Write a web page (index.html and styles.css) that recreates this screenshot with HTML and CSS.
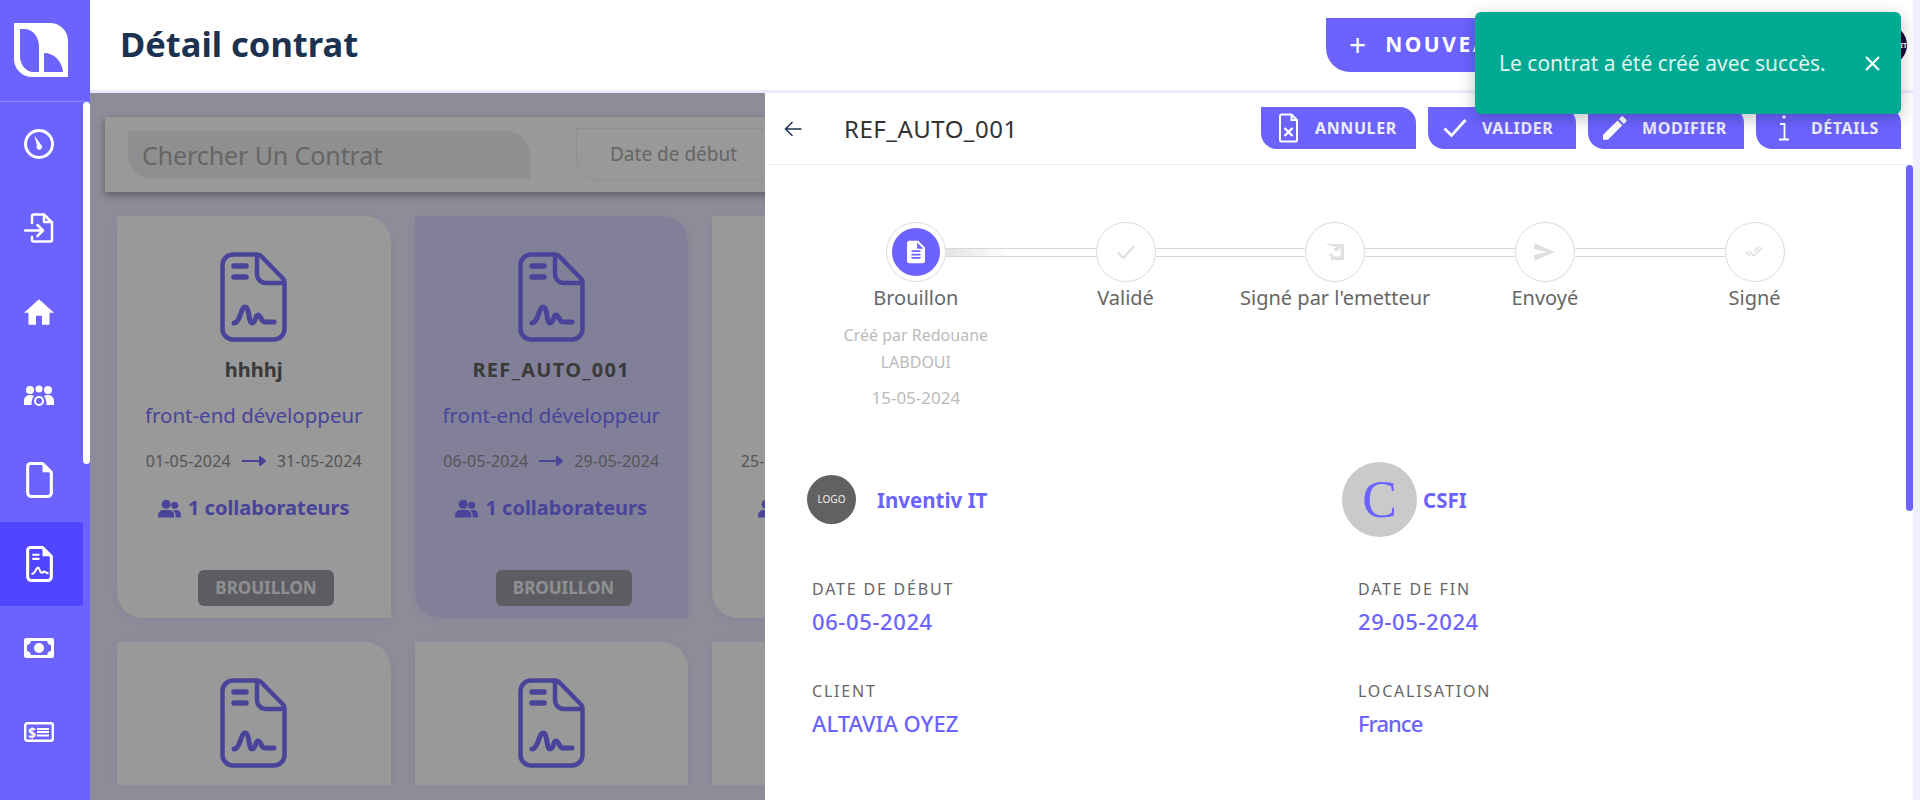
FILE: index.html
```html
<!DOCTYPE html>
<html lang="fr">
<head>
<meta charset="utf-8">
<title>Détail contrat</title>
<link rel="stylesheet" href="styles.css">
</head>
<body>
<svg class="defs" width="0" height="0" aria-hidden="true">
  <symbol id="contract" viewBox="0 0 67 90">
    <g fill="none" stroke="currentColor" stroke-width="4.5" stroke-linecap="round" stroke-linejoin="round">
      <path d="M13 2.5H37a6 6 0 0 1 4.5 2L62.5 26a6 6 0 0 1 2 4.5V77A10.500 10.500 0 0 1 54 87.500H13A10.500 10.500 0 0 1 2.500 77V13A10.500 10.500 0 0 1 13 2.500Z"/>
      <path d="M37 3V22a9 9 0 0 0 9 9H64"/>
      <path d="M14 14H26M14 25H26" stroke-width="5.500"/>
      <path d="M14 71C20 71 21 55 25 55C30 55 28 71 32 71C36 71 35 63 38 63C41 63 41 70 45 70H54" stroke-width="5"/>
    </g>
  </symbol>
  <symbol id="friends" viewBox="0 0 24 20">
    <circle cx="8.500" cy="5.500" r="4.800"/>
    <path d="M0 19.500V17c0-3.500 3-5.500 5.500-5.500h6c2.500 0 5.500 2 5.500 5.500v2.500Z"/>
    <circle cx="17.500" cy="6.500" r="3.700"/>
    <path d="M15.500 11.500h4c2.500 0 4.500 2 4.500 4.500v3.500h-5.500V17c0-2-1.200-4-3-5.500Z"/>
  </symbol>
</svg>

<div class="app">
  <aside class="side">
    <div class="brand">
      <svg class="brand-logo" viewBox="0 0 54 54">
        <path fill="#fff" d="M0 0H36A18 18 0 0 1 54 18V54H18A18 18 0 0 1 0 36Z"/>
        <path fill="#6c63ff" d="M6 6H10C19 6 25 14 25 24V49H20C11 49 6 41 6 33Z"/>
        <path fill="#6c63ff" d="M30 30C40 30 48 38 49 49H30Z"/>
      </svg>
    </div>
    <div class="side-body">
      <nav class="nav">
        <a class="nav-item">
          <svg class="nav-ic" viewBox="0 0 30 30"><circle cx="15" cy="15" r="13.500" fill="none" stroke="#fff" stroke-width="3"/><path d="M10.500 6.500L13 16.500a2.700 2.700 0 1 0 4-.7Z" fill="#fff"/></svg>
        </a>
        <a class="nav-item">
          <svg class="nav-ic" viewBox="0 0 30 30"><path d="M8 10V3a1.500 1.500 0 0 1 1.500-1.500H20l8 8V27a1.500 1.500 0 0 1-1.500 1.500H9.500A1.500 1.500 0 0 1 8 27V24M20 2v7h8" fill="none" stroke="#fff" stroke-width="2.500" stroke-linejoin="round" stroke-linecap="round"/><path d="M1 17.500H19M13.500 12l5.500 5.500-5.500 5.500" fill="none" stroke="#fff" stroke-width="2.500" stroke-linecap="round" stroke-linejoin="round"/></svg>
        </a>
        <a class="nav-item">
          <svg class="nav-ic" viewBox="2 3 20 17"><path fill="#fff" d="M10 20v-6h4v6h5v-8h3L12 3 2 12h3v8z"/></svg>
        </a>
        <a class="nav-item">
          <svg class="nav-ic" viewBox="0 0 30 22"><g fill="#fff"><circle cx="6" cy="5" r="4"/><circle cx="24" cy="5" r="4"/><circle cx="15" cy="4" r="3.500"/><path d="M0 20v-4c0-4 3-6 6-6 2 0 3 .5 4 1.200-1.500 1.500-2.500 4-2.500 8.800ZM30 20v-4c0-4-3-6-6-6-2 0-3 .5-4 1.200 1.500 1.500 2.500 4 2.500 8.800Z"/></g><circle cx="15" cy="16" r="4" fill="#6c63ff" stroke="#fff" stroke-width="2"/></svg>
        </a>
        <a class="nav-item">
          <svg class="nav-ic nav-file" viewBox="0 0 26 35"><path d="M4 1.500H16L24.500 10V30A3.500 3.500 0 0 1 21 33.500H5A3.500 3.500 0 0 1 1.500 30V4A3 3 0 0 1 4 1.500Z" fill="none" stroke="#fff" stroke-width="3" stroke-linejoin="round"/><path d="M16 1.500V10H24.500Z" fill="#fff"/></svg>
        </a>
        <a class="nav-item active">
          <svg class="nav-ic nav-file" viewBox="0 0 26 35"><path d="M4 1.500H16L24.500 10V30A3.500 3.500 0 0 1 21 33.500H5A3.500 3.500 0 0 1 1.500 30V4A3 3 0 0 1 4 1.500Z" fill="none" stroke="#fff" stroke-width="3" stroke-linejoin="round"/><path d="M16 1.500V10H24.500Z" fill="#fff"/><path d="M6 8.500H13M6 12.500H13" stroke="#fff" stroke-width="2"/><path d="M6 27C9 27 9.500 21 11.500 21C13.500 21 13 26 15 26C16.500 26 16.500 24.500 18 25L21 26.500" fill="none" stroke="#fff" stroke-width="2" stroke-linecap="round"/></svg>
        </a>
        <a class="nav-item">
          <svg class="nav-ic" viewBox="0 0 30 20"><path fill="#fff" fill-rule="evenodd" d="M2 0H28a2 2 0 0 1 2 2V18a2 2 0 0 1-2 2H2a2 2 0 0 1-2-2V2A2 2 0 0 1 2 0ZM7 3C6.500 5.500 5.500 6.500 3 7V13C5.500 13.500 6.500 14.500 7 17H23C23.500 14.500 24.500 13.500 27 13V7C24.500 6.500 23.500 5.500 23 3Z"/><circle cx="15" cy="10" r="5" fill="#fff"/></svg>
        </a>
        <a class="nav-item">
          <svg class="nav-ic" viewBox="0 0 30 20"><rect x="1.200" y="1.200" width="27.600" height="17.600" rx="2" fill="none" stroke="#fff" stroke-width="2.400"/><text x="8" y="15.500" class="dollar">$</text><path d="M13 7H25M13 10H25M13 13.500H25" stroke="#fff" stroke-width="2"/></svg>
        </a>
      </nav>
      <div class="side-scroll"><span class="side-thumb"></span></div>
    </div>
  </aside>

  <div class="main">
    <header class="top">
      <h1 class="page-title">Détail contrat</h1>
      <button class="new-btn"><span class="plus">+</span>NOUVEAU CONTRAT</button>
      <div class="avatar"><span class="avatar-text">INVENTIT</span></div>
    </header>
    <div class="content">
      <section class="filters">
        <div class="search">Chercher Un Contrat</div>
        <div class="date-field">Date de début</div>
      </section>
      <section class="cards">
        <article class="card">
          <svg class="card-ic"><use href="#contract"/></svg>
          <h3 class="card-name">hhhhj</h3>
          <p class="card-job">front-end développeur</p>
          <p class="card-dates"><span>01-05-2024</span><svg class="date-arrow" viewBox="0 0 24 10"><path d="M0 5H22M18 1l5 4-5 4Z" stroke="currentColor" stroke-width="2" fill="currentColor"/></svg><span>31-05-2024</span></p>
          <p class="card-team"><svg class="team-ic"><use href="#friends"/></svg>1 collaborateurs</p>
          <span class="badge">BROUILLON</span>
        </article>
        <article class="card selected">
          <svg class="card-ic"><use href="#contract"/></svg>
          <h3 class="card-name wide">REF_AUTO_001</h3>
          <p class="card-job">front-end développeur</p>
          <p class="card-dates"><span>06-05-2024</span><svg class="date-arrow" viewBox="0 0 24 10"><path d="M0 5H22M18 1l5 4-5 4Z" stroke="currentColor" stroke-width="2" fill="currentColor"/></svg><span>29-05-2024</span></p>
          <p class="card-team"><svg class="team-ic"><use href="#friends"/></svg>1 collaborateurs</p>
          <span class="badge">BROUILLON</span>
        </article>
        <article class="card">
          <svg class="card-ic"><use href="#contract"/></svg>
          <h3 class="card-name">REF_002</h3>
          <p class="card-job">développeur</p>
          <p class="card-dates"><span>25-05-2024</span><svg class="date-arrow" viewBox="0 0 24 10"><path d="M0 5H22M18 1l5 4-5 4Z" stroke="currentColor" stroke-width="2" fill="currentColor"/></svg><span>31-05-2024</span></p>
          <p class="card-team"><svg class="team-ic"><use href="#friends"/></svg>1 collaborateur</p>
          <span class="badge">BROUILLON</span>
        </article>
        <article class="card"><svg class="card-ic"><use href="#contract"/></svg></article>
        <article class="card"><svg class="card-ic"><use href="#contract"/></svg></article>
        <article class="card"><svg class="card-ic"><use href="#contract"/></svg></article>
      </section>
    </div>
  </div>
  <div class="page-scroll"></div>

  <div class="overlay"></div>

  <section class="panel">
    <header class="panel-head">
      <svg class="back" viewBox="0 0 18 16"><path d="M17.500 8H1.500M8.500 1L1.500 8l7 7" fill="none" stroke="#1b3250" stroke-width="1.500"/></svg>
      <h2 class="panel-title">REF_AUTO_001</h2>
      <div class="actions">
        <button class="act act-annuler"><svg class="act-ic" viewBox="0 0 20 30"><path d="M3 1.500H13L18.500 7V27A1.500 1.500 0 0 1 17 28.500H3A1.500 1.500 0 0 1 1.500 27V3A1.500 1.500 0 0 1 3 1.500ZM13 2V7H18" fill="none" stroke="#fff" stroke-width="2"/><path d="M6 15L14 23M14 15L6 23" stroke="#fff" stroke-width="2.400"/></svg>ANNULER</button>
        <button class="act act-valider"><svg class="act-ic" viewBox="0 0 24 20"><path d="M1.500 10.500L8.500 17.500L22.500 2" fill="none" stroke="#fff" stroke-width="2.800"/></svg>VALIDER</button>
        <button class="act act-modifier"><svg class="act-ic" viewBox="3 3 18.300 18"><path fill="#fff" d="M3 17.250V21h3.750L17.810 9.940l-3.750-3.750L3 17.250zM20.710 7.040c.39-.39.39-1.020 0-1.410l-2.340-2.340c-.39-.39-1.020-.39-1.410 0l-1.830 1.830 3.750 3.750 1.830-1.830z"/></svg>MODIFIER</button>
        <button class="act act-details"><svg class="act-ic" viewBox="0 0 12 26"><circle cx="6" cy="2" r="1.800" fill="#fff"/><path d="M2 9H6.500V24.500M1 24.500H11" fill="none" stroke="#fff" stroke-width="1.800"/></svg>DÉTAILS</button>
      </div>
    </header>
    <div class="panel-body">
      <div class="panel-content">
        <ol class="stepper">
          <li class="step first">
            <div class="step-head"><span class="line none"></span><span class="dot current"><span class="dot-in"><svg class="dot-doc" viewBox="4 2 16 20"><path fill="#fff" d="M14 2H6c-1.100 0-1.990.9-1.990 2L4 20c0 1.100.89 2 1.990 2H18c1.100 0 2-.9 2-2V8l-6-6zm2 16H8v-1.500h8V18zm0-3H8v-1.500h8V15zm0-3H8v-1.500h8V12zm-3-3V3.500L18.500 9H13z"/></svg></span></span><span class="line grad"></span></div>
            <div class="step-label">Brouillon</div>
            <div class="step-by">Créé par Redouane LABDOUI</div>
            <div class="step-date">15-05-2024</div>
          </li>
          <li class="step">
            <div class="step-head"><span class="line"></span><span class="dot"><svg class="dot-ic" viewBox="0 0 20 16"><path d="M2 8.500L7.500 14L18 2" fill="none" stroke="#e0e0e0" stroke-width="2.500"/></svg></span><span class="line"></span></div>
            <div class="step-label">Validé</div>
          </li>
          <li class="step">
            <div class="step-head"><span class="line"></span><span class="dot"><svg class="dot-ic" viewBox="0 0 20 16"><path fill="#e0e0e0" d="M0 0H19V16H6V11.500H3L7 9 8.500 12.500H15.500V4L11 8 8.500 4.500 12 3.500 0 0Z"/></svg></span><span class="line"></span></div>
            <div class="step-label">Signé par l'emetteur</div>
          </li>
          <li class="step">
            <div class="step-head"><span class="line"></span><span class="dot"><svg class="dot-send" viewBox="0 0 21 18"><path fill="#e0e0e0" d="M0 0L21 9 0 18V12L13 9 0 6Z"/></svg></span><span class="line"></span></div>
            <div class="step-label">Envoyé</div>
          </li>
          <li class="step">
            <div class="step-head"><span class="line"></span><span class="dot"><svg class="dot-ic" viewBox="0 0 24 16"><path d="M1 7.500L6 12.500M5.500 7.500L10.500 12.500L21 2.500M11 7.500L17 1.500" fill="none" stroke="#e0e0e0" stroke-width="2"/></svg></span><span class="line none"></span></div>
            <div class="step-label">Signé</div>
          </li>
        </ol>

        <div class="parties">
          <div class="party"><span class="party-logo">LOGO</span><span class="party-name">Inventiv IT</span></div>
          <div class="party"><span class="party-letter">C</span><span class="party-name">CSFI</span></div>
        </div>

        <dl class="fields">
          <div class="field"><dt>DATE DE DÉBUT</dt><dd class="num">06-05-2024</dd></div>
          <div class="field"><dt>DATE DE FIN</dt><dd class="num">29-05-2024</dd></div>
          <div class="field"><dt>CLIENT</dt><dd>ALTAVIA OYEZ</dd></div>
          <div class="field"><dt>LOCALISATION</dt><dd class="short">France</dd></div>
        </dl>
      </div>
      <div class="panel-scroll"><span class="panel-thumb"></span></div>
    </div>
  </section>

  <div class="toast">
    <span class="toast-text">Le contrat a été créé avec succès.</span>
    <svg class="toast-x" viewBox="0 0 14 14"><path d="M1 1L13 13M13 1L1 13" stroke="#fff" stroke-width="2"/></svg>
  </div>
</div>
</body>
</html>
```
FILE: styles.css
```css
* { box-sizing: border-box; }
html, body { margin: 0; height: 100%; }
body { font-family: "Noto Sans", "Lato", sans-serif; overflow: hidden; background: #fff; }
.defs { position: absolute; }
h1, h2, h3, p, dl, dd, ol { margin: 0; padding: 0; }
ol { list-style: none; }
button { font-family: inherit; border: 0; cursor: pointer; }

.app { position: relative; display: flex; width: 1920px; height: 800px; overflow: hidden; }

/* sidebar */
.side { width: 90px; flex: none; background: #6c63ff; display: flex; flex-direction: column; position: relative; z-index: 2; }
.brand { height: 102px; flex: none; border-bottom: 1px solid #8f88ff; padding: 23px 0 0 14px; }
.brand-logo { display: block; width: 54px; height: 54px; }
.side-body { display: flex; flex: 1; min-height: 0; }
.nav { width: 83px; display: flex; flex-direction: column; }
.nav-item { height: 84px; flex: none; display: flex; align-items: center; padding-left: 24px; }
.nav-item.active { background: #5046ff; }
.nav-ic { width: 30px; height: 30px; display: block; }
.nav-file { width: 27px; height: 36px; margin-left: 2px; }
.dollar { font: 700 14px "Noto Sans", sans-serif; fill: #fff; text-anchor: middle; }
.side-scroll { width: 7px; }
.side-thumb { display: block; width: 7px; height: 362px; background: #fff; border-radius: 4px; }

/* main */
.main { flex: 1; min-width: 0; display: flex; flex-direction: column; background: #ece9fd; isolation: isolate; }
.top { height: 93px; flex: none; background: #fff; border-bottom: 3px solid #ece9fd; display: flex; align-items: flex-start; padding-left: 30px; }
.page-title { font-size: 34.500px; line-height: 87px; font-weight: 700; color: #1b3250; flex: 1; }
.new-btn { margin-top: 18px; width: 500px; height: 54px; background: #6c63ff; color: #fff; font-size: 21px; font-weight: 700; letter-spacing: 2.500px; border-radius: 0 24px 0 24px; text-align: left; padding: 0 0 2px 23px; display: flex; align-items: center; }
.plus { font-size: 30px; font-weight: 400; margin-right: 19px; letter-spacing: 0; }
.avatar { width: 40px; height: 40px; margin: 25px 6px 0 41px; border-radius: 50%; background: #14103f; display: flex; align-items: center; justify-content: flex-end; overflow: hidden; }
.avatar-text { color: #fff; font-size: 7px; font-weight: 700; white-space: nowrap; }
.content { flex: 1; min-height: 0; padding: 24px 0 15px 15px; display: flex; flex-direction: column; }
.filters { height: 75px; flex: none; background: #fff; box-shadow: 0 3px 8px rgba(0,0,0,.35); display: flex; align-items: center; padding-left: 23px; position: relative; z-index: 1; }
.search { width: 402px; height: 48px; background: #eee; border-radius: 0 24px 0 24px; font-size: 25px; line-height: 48px; padding-left: 14px; color: #aaa; letter-spacing: -.1px; }
.date-field { width: 320px; height: 53px; margin-left: 46px; border: 1px solid #eee; border-radius: 0 24px 0 24px; font-size: 19px; line-height: 51px; padding-left: 33px; color: #aaa; }
.cards { flex: 1; min-height: 0; overflow: hidden; padding: 24px 0 0 12px; display: grid; grid-template-columns: repeat(3, 273.500px); grid-auto-rows: 402px; gap: 24px; }
.card { background: #fff; border-radius: 0 26px 0 26px; box-shadow: 0 2px 8px rgba(108,99,255,.08); display: flex; flex-direction: column; align-items: center; padding-top: 36px; position: relative; }
.card.selected { background: #d9d4ff; }
.card-ic { width: 67px; height: 90px; color: #7a72ff; flex: none; }
.card-name { font-size: 20px; line-height: 28px; margin-top: 14px; font-weight: 700; color: #616161; }
.card-name.wide { letter-spacing: 1.300px; }
.card-job { font-size: 20.500px; line-height: 28px; margin-top: 17px; color: #7a72ff; white-space: nowrap; }
.card-dates { display: flex; align-items: center; font-size: 16px; line-height: 20px; margin-top: 22px; color: #8e8e8e; letter-spacing: .15px; white-space: nowrap; }
.date-arrow { width: 24px; height: 10px; margin: 0 11px; color: #7a72ff; }
.card-team { display: flex; align-items: center; font-size: 20px; font-weight: 700; line-height: 28px; margin-top: 23px; color: #7a72ff; white-space: nowrap; }
.team-ic { width: 23px; height: 19px; fill: #7a72ff; margin-right: 7px; }
.badge { position: absolute; left: 81px; top: 354px; width: 136px; height: 36px; background: #989ba6; color: #eee; border-radius: 6px; font-size: 17px; font-weight: 700; line-height: 36px; text-align: center; }
.page-scroll { width: 7px; flex: none; background: #f0efff; position: relative; z-index: 2; }

/* overlay + drawer */
.overlay { position: absolute; left: 90px; top: 93px; right: 7px; bottom: 0; background: rgba(0,0,0,.4); }
.panel { position: absolute; left: 765px; top: 93px; right: 7px; bottom: 0; background: #fff; display: flex; flex-direction: column; }
.panel-head { height: 72px; flex: none; border-bottom: 1px solid #f0efff; display: flex; align-items: center; padding: 0 12px 0 19px; }
.back { width: 18px; height: 16px; flex: none; }
.panel-title { font-size: 24px; font-weight: 400; color: #333; margin-left: 42px; flex: 1; letter-spacing: .5px; }
.actions { display: flex; gap: 12px; margin-top: -1px; }
.act { height: 42px; background: #6c63ff; color: #eeeeff; font-size: 16px; font-weight: 700; letter-spacing: .6px; border-radius: 0 16px 0 16px; display: flex; align-items: center; padding: 0; }
.act-ic { display: block; flex: none; }
.act-annuler { width: 155px; padding-left: 17px; }
.act-annuler .act-ic { width: 21px; height: 30px; margin-right: 16px; }
.act-valider { width: 148px; padding-left: 15px; }
.act-valider .act-ic { width: 24px; height: 20px; margin-right: 15px; }
.act-modifier { width: 156px; padding-left: 15px; }
.act-modifier .act-ic { width: 24px; height: 24px; margin-right: 15px; }
.act-details { width: 145px; padding-left: 22px; }
.act-details .act-ic { width: 12px; height: 26px; margin-right: 21px; }
.panel-body { flex: 1; min-height: 0; display: flex; }
.panel-content { flex: 1; min-width: 0; padding: 57px 0 0 46px; }
.panel-scroll { width: 7px; flex: none; }
.panel-thumb { display: block; width: 7px; height: 346px; background: #6c63ff; border-radius: 4px; }

.stepper { display: grid; grid-template-columns: repeat(5, 209.700px); }
.step { display: flex; flex-direction: column; align-items: center; text-align: center; }
.step-head { display: flex; align-items: center; width: 100%; }
.line { flex: 1; height: 9px; border-top: 1px solid #d6d6dc; border-bottom: 1px solid #d6d6dc; }
.line.none { border: 0; }
.line.grad { background: linear-gradient(90deg, #e3e3e3, #fff 85%); }
.dot { width: 60px; height: 60px; flex: none; border: 1px solid #dcdcdc; border-radius: 50%; display: flex; align-items: center; justify-content: center; }
.dot-in { width: 48px; height: 48px; border-radius: 50%; background: #6c63ff; display: flex; align-items: center; justify-content: center; }
.dot-doc { width: 18px; height: 24px; }
.dot-ic { width: 20px; height: 16px; }
.dot-send { width: 21px; height: 18px; }
.step-label { font-size: 20px; line-height: 30px; margin-top: 1px; color: #666; white-space: nowrap; }
.step-by { width: 170px; font-size: 16px; line-height: 27px; margin-top: 9px; color: #bbb; }
.step-date { font-size: 17px; line-height: 26px; margin-top: 9px; color: #bbb; }

.parties { display: grid; grid-template-columns: 535px 1fr; margin: 51px 0 0 -4px; }
.party { display: flex; align-items: center; height: 75px; }
.party-logo { width: 49px; height: 49px; border-radius: 50%; background: #616161; color: #eee; font-size: 10px; line-height: 49px; text-align: center; margin-right: 21px; }
.party-letter { width: 75px; height: 75px; border-radius: 50%; background: #cacaca; color: #6c63ff; font: 52px/75px "Liberation Serif", serif; text-align: center; margin-right: 6px; }
.party-name { font-size: 20.500px; font-weight: 700; color: #6c63ff; }
.fields { display: grid; grid-template-columns: 546px 1fr; row-gap: 43px; margin: 40px 0 0 1px; }
.field dt { font-size: 16px; line-height: 24px; color: #666; letter-spacing: 1.800px; }
.field dd { font-size: 22px; line-height: 30px; margin-top: 5px; color: #6c63ff; font-weight: 500; }
.field dd.num { letter-spacing: .6px; }
.field dd.short { letter-spacing: -1px; }

/* toast */
.toast { position: absolute; left: 1475px; top: 12px; width: 426px; height: 102px; background: #00a991; border-radius: 6px; box-shadow: 0 4px 16px rgba(0,0,0,.25); display: flex; align-items: center; padding: 0 21px 0 24px; color: #dff4ef; font-size: 21px; }
.toast-text { flex: 1; }
.toast-x { width: 15px; height: 15px; flex: none; }
```
